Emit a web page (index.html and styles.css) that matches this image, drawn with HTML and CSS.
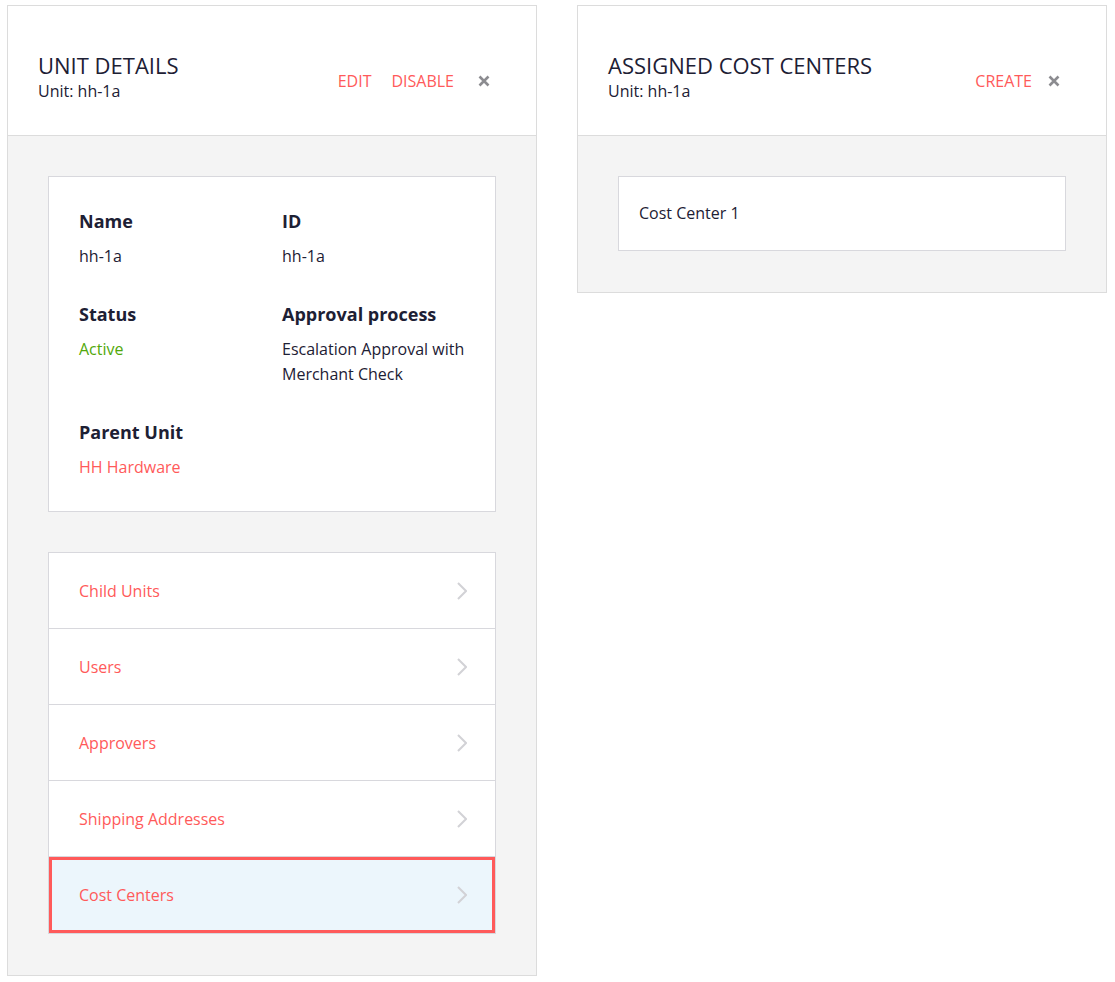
FILE: index.html
```html
<!DOCTYPE html>
<html lang="en">
<head>
<meta charset="utf-8">
<title>Unit Details</title>
<link rel="stylesheet" href="styles.css">
</head>
<body>
<div class="page">
  <section class="panel">
    <header class="panel-header">
      <div class="heading">
        <h1 class="title">UNIT DETAILS</h1>
        <div class="subtitle">Unit: hh-1a</div>
      </div>
      <div class="actions">
        <a class="action">EDIT</a>
        <a class="action">DISABLE</a>
        <span class="close">
          <svg width="12" height="12" viewBox="0 0 12 12"><path d="M1.5 1.5 L10.5 10.5 M10.5 1.5 L1.5 10.5" stroke="#8c8c90" stroke-width="2.6" stroke-linecap="butt"/></svg>
        </span>
      </div>
    </header>
    <div class="panel-body">
      <div class="card details">
        <div class="field">
          <div class="label">Name</div>
          <div class="value">hh-1a</div>
        </div>
        <div class="field">
          <div class="label">ID</div>
          <div class="value">hh-1a</div>
        </div>
        <div class="field">
          <div class="label">Status</div>
          <div class="value green">Active</div>
        </div>
        <div class="field">
          <div class="label">Approval process</div>
          <div class="value">Escalation Approval with Merchant Check</div>
        </div>
        <div class="field">
          <div class="label">Parent Unit</div>
          <div class="value red">HH Hardware</div>
        </div>
      </div>
      <nav class="card nav">
        <a class="nav-item"><span>Child Units</span><svg class="chev" width="10" height="18" viewBox="0 0 10 18"><polyline points="1,1 9,9 1,17" fill="none" stroke="#d2d2d6" stroke-width="2"/></svg></a>
        <a class="nav-item"><span>Users</span><svg class="chev" width="10" height="18" viewBox="0 0 10 18"><polyline points="1,1 9,9 1,17" fill="none" stroke="#d2d2d6" stroke-width="2"/></svg></a>
        <a class="nav-item"><span>Approvers</span><svg class="chev" width="10" height="18" viewBox="0 0 10 18"><polyline points="1,1 9,9 1,17" fill="none" stroke="#d2d2d6" stroke-width="2"/></svg></a>
        <a class="nav-item"><span>Shipping Addresses</span><svg class="chev" width="10" height="18" viewBox="0 0 10 18"><polyline points="1,1 9,9 1,17" fill="none" stroke="#d2d2d6" stroke-width="2"/></svg></a>
        <a class="nav-item active"><span>Cost Centers</span><svg class="chev" width="10" height="18" viewBox="0 0 10 18"><polyline points="1,1 9,9 1,17" fill="none" stroke="#d2d2d6" stroke-width="2"/></svg></a>
      </nav>
    </div>
  </section>

  <section class="panel">
    <header class="panel-header">
      <div class="heading">
        <h1 class="title">ASSIGNED COST CENTERS</h1>
        <div class="subtitle">Unit: hh-1a</div>
      </div>
      <div class="actions">
        <a class="action">CREATE</a>
        <span class="close tight">
          <svg width="12" height="12" viewBox="0 0 12 12"><path d="M1.5 1.5 L10.5 10.5 M10.5 1.5 L1.5 10.5" stroke="#8c8c90" stroke-width="2.6" stroke-linecap="butt"/></svg>
        </span>
      </div>
    </header>
    <div class="panel-body">
      <div class="card list-card">Cost Center 1</div>
    </div>
  </section>
</div>
</body>
</html>
```

FILE: styles.css
```css
* { box-sizing: border-box; }

html, body {
  margin: 0;
  padding: 0;
  background: #ffffff;
}

body {
  font-family: "Open Sans", "Liberation Sans", sans-serif;
  color: #1d2034;
  font-size: 16px;
}

.page {
  display: flex;
  align-items: flex-start;
  gap: 40px;
  padding: 5px 0 0 7px;
}

.panel {
  width: 530px;
  border: 1px solid #dcdcdc;
  background: #ffffff;
}

.panel-header {
  height: 130px;
  display: flex;
  align-items: flex-start;
  justify-content: space-between;
  padding: 44px 46px 0 30px;
  border-bottom: 1px solid #dcdcdc;
}

.heading {
  display: flex;
  flex-direction: column;
}

.title {
  margin: 0;
  font-size: 22px;
  font-weight: 400;
  line-height: 30px;
  color: #1d2034;
}

.subtitle {
  font-size: 16px;
  line-height: 22px;
  color: #1d2034;
}

.actions {
  display: flex;
  align-items: center;
  gap: 20px;
  margin-top: 20px;
  height: 22px;
}

.action {
  color: #ff5a5a;
  font-size: 16px;
  line-height: 22px;
  cursor: pointer;
}

.close {
  display: flex;
  width: 12px;
  height: 12px;
  margin-left: 4px;
}

.close.tight {
  margin-left: -4px;
}

.panel-body {
  background: #f4f4f4;
  padding: 40px 40px 41px 40px;
  display: flex;
  flex-direction: column;
  gap: 40px;
}

.card {
  background: #ffffff;
  border: 1px solid #d8d8dd;
}

.details {
  display: grid;
  grid-template-columns: 1fr 1fr;
  column-gap: 20px;
  row-gap: 33px;
  padding: 32px 30px 31px 30px;
}

.label {
  font-size: 18px;
  font-weight: 700;
  line-height: 24px;
  margin-bottom: 11px;
  color: #1d2034;
}

.value {
  font-size: 16px;
  line-height: 25px;
  color: #1d2034;
}

.value.green { color: #52a80a; }
.value.red { color: #ff5a5a; }

.nav {
  display: flex;
  flex-direction: column;
}

.nav-item {
  height: 76px;
  display: flex;
  align-items: center;
  justify-content: space-between;
  padding: 0 28px 0 30px;
  border-bottom: 1px solid #d8d8dd;
  color: #ff5a5a;
  font-size: 16px;
  line-height: 22px;
  cursor: pointer;
}

.nav-item:last-child {
  border-bottom: none;
}

.nav-item.active {
  background: #ecf6fc;
  border: 3px solid #ff5a5a;
  padding: 0 25px 0 27px;
}

.chev {
  display: block;
}

.list-card {
  padding: 25px 20px 26px 20px;
  font-size: 16px;
  line-height: 22px;
  color: #1d2034;
}
```
